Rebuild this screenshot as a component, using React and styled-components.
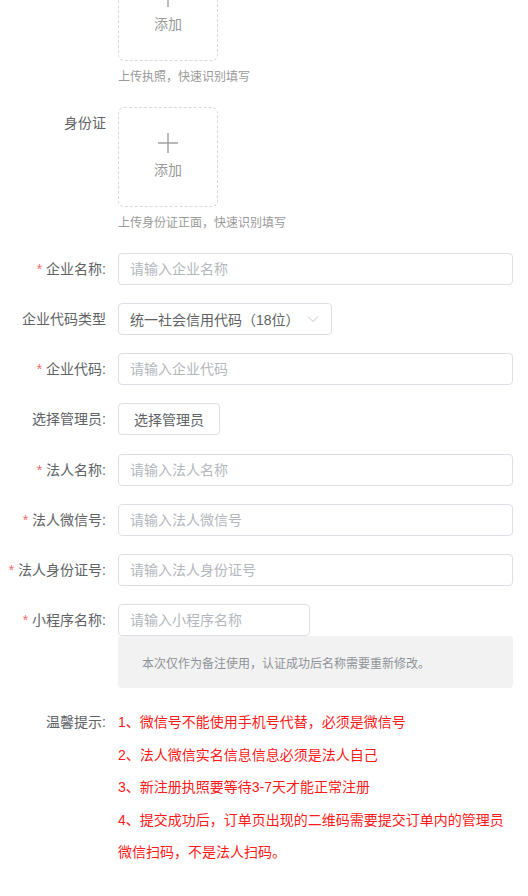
import styled, { createGlobalStyle } from "styled-components";

const GlobalStyle = createGlobalStyle`
  html, body {
    margin: 0;
    padding: 0;
    background: #fff;
  }
  body {
    font-family: "Liberation Sans", "Noto Sans CJK SC", sans-serif;
    font-size: 14px;
    color: #606266;
    overflow: hidden;
  }
`;

const Form = styled.div`
  width: 528px;
  margin-top: -39px;
  padding-right: 15px;
  box-sizing: border-box;
`;

const Row = styled.div`
  display: flex;
  align-items: flex-start;
  margin-bottom: ${(p) => p.$gap ?? 18}px;
`;

const Label = styled.div`
  width: 118px;
  flex: none;
  box-sizing: border-box;
  padding-right: 12px;
  text-align: right;
  line-height: 32px;
  font-size: 14px;
  color: #606266;
  white-space: nowrap;
`;

const Star = styled.span`
  color: #f56c6c;
  margin-right: 4px;
`;

const Control = styled.div`
  flex: 1;
  min-width: 0;
`;

const Upload = styled.div`
  width: 100px;
  height: 100px;
  box-sizing: border-box;
  border: 1px dashed #d9d9d9;
  border-radius: 6px;
  display: flex;
  flex-direction: column;
  align-items: center;
  justify-content: center;
  gap: 6px;
  padding-bottom: 2px;
  color: #999;
  font-size: 14px;
  line-height: 20px;
`;

const Hint = styled.div`
  margin-top: 6px;
  font-size: 12px;
  line-height: 20px;
  color: #999;
`;

const Input = styled.input`
  display: block;
  width: ${(p) => p.$width || "100%"};
  height: 32px;
  box-sizing: border-box;
  border: 1px solid #dcdfe6;
  border-radius: 4px;
  padding: 0 11px;
  font-family: inherit;
  font-size: 14px;
  color: #606266;
  outline: none;
  &::placeholder {
    color: #b4b7bd;
  }
`;

const Select = styled.div`
  width: 214px;
  height: 32px;
  box-sizing: border-box;
  border: 1px solid #dcdfe6;
  border-radius: 4px;
  padding: 0 12px 0 11px;
  display: flex;
  align-items: center;
  justify-content: space-between;
  color: #606266;
  font-size: 14px;
`;

const Button = styled.button`
  height: 32px;
  padding: 0 15px;
  border: 1px solid #dcdfe6;
  border-radius: 4px;
  background: #fff;
  font-family: inherit;
  font-size: 14px;
  color: #606266;
  margin-bottom: 1px;
`;

const Note = styled.div`
  height: 52px;
  background: #f2f2f2;
  border-radius: 4px;
  padding-left: 24px;
  display: flex;
  align-items: center;
  font-size: 12px;
  color: #909399;
`;

const Tips = styled.div`
  color: #ff1a1a;
  font-size: 14px;
  line-height: 32.5px;
`;

const TipLabel = styled(Label)`
  line-height: 32.5px;
`;

function Plus() {
  return (
    <svg width="22" height="22" viewBox="0 0 22 22">
      <path d="M11 1v20M1 11h20" stroke="#a0a0a0" strokeWidth="1.4" fill="none" />
    </svg>
  );
}

function Chevron() {
  return (
    <svg width="12" height="8" viewBox="0 0 12 8">
      <path d="M1 1.5l5 5 5-5" stroke="#c0c4cc" strokeWidth="1" fill="none" />
    </svg>
  );
}

function UploadRow({ label, hint }) {
  return (
    <Row $gap={20}>
      <Label>{label}</Label>
      <Control>
        <Upload>
          <Plus />
          <span>添加</span>
        </Upload>
        <Hint>{hint}</Hint>
      </Control>
    </Row>
  );
}

function InputRow({ label, placeholder, required = true }) {
  return (
    <Row>
      <Label>
        {required && <Star>*</Star>}
        {label}
      </Label>
      <Control>
        <Input placeholder={placeholder} />
      </Control>
    </Row>
  );
}

const tips = [
  "1、微信号不能使用手机号代替，必须是微信号",
  "2、法人微信实名信息信息必须是法人自己",
  "3、新注册执照要等待3-7天才能正常注册",
  "4、提交成功后，订单页出现的二维码需要提交订单内的管理员",
  "微信扫码，不是法人扫码。",
];

export default function App() {
  return (
    <>
      <GlobalStyle />
      <Form>
        <UploadRow label="" hint="上传执照，快速识别填写" />
        <UploadRow label="身份证" hint="上传身份证正面，快速识别填写" />
        <InputRow label="企业名称:" placeholder="请输入企业名称" />
        <Row>
          <Label>企业代码类型</Label>
          <Control>
            <Select>
              <span>统一社会信用代码（18位）</span>
              <Chevron />
            </Select>
          </Control>
        </Row>
        <InputRow label="企业代码:" placeholder="请输入企业代码" />
        <Row>
          <Label>选择管理员:</Label>
          <Control>
            <Button>选择管理员</Button>
          </Control>
        </Row>
        <InputRow label="法人名称:" placeholder="请输入法人名称" />
        <InputRow label="法人微信号:" placeholder="请输入法人微信号" />
        <InputRow label="法人身份证号:" placeholder="请输入法人身份证号" />
        <Row>
          <Label>
            <Star>*</Star>小程序名称:
          </Label>
          <Control>
            <Input $width="192px" placeholder="请输入小程序名称" />
            <Note>本次仅作为备注使用，认证成功后名称需要重新修改。</Note>
          </Control>
        </Row>
        <Row>
          <TipLabel>温馨提示:</TipLabel>
          <Control>
            <Tips>
              {tips.map((t) => (
                <div key={t}>{t}</div>
              ))}
            </Tips>
          </Control>
        </Row>
      </Form>
    </>
  );
}
